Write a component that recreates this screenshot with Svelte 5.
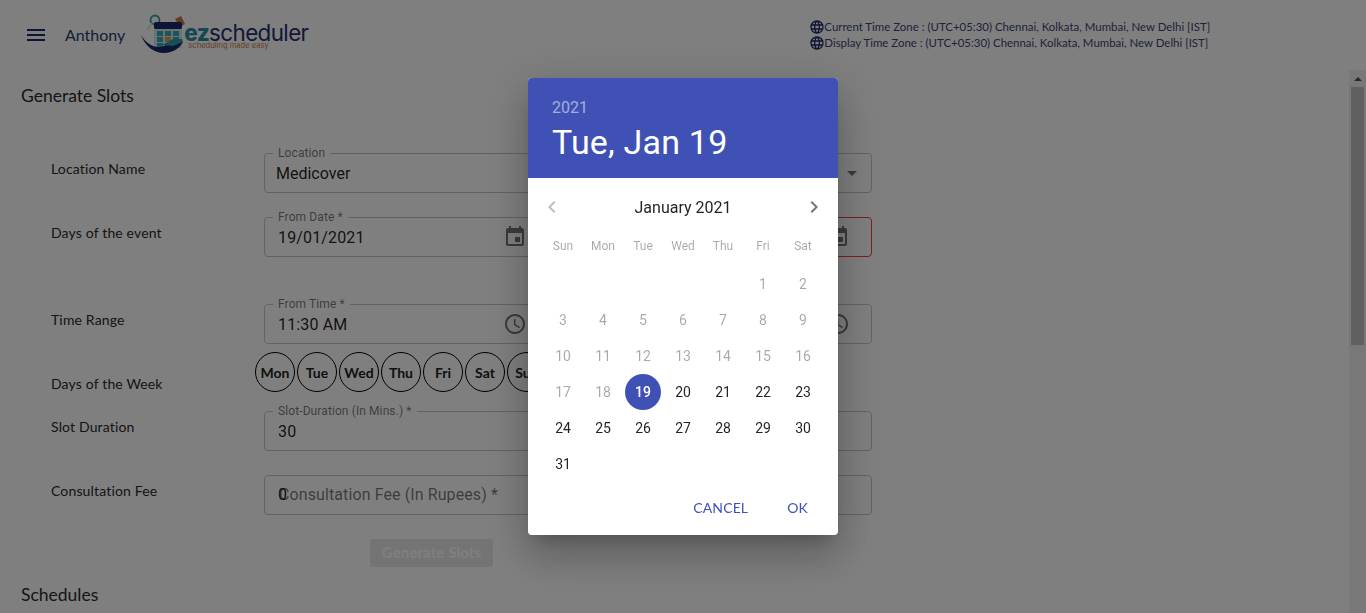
<script>
  const weekdays = ['Sun', 'Mon', 'Tue', 'Wed', 'Thu', 'Fri', 'Sat'];
  // January 2021 starts on a Friday, days before today are disabled
  const blanks = [0, 1, 2, 3, 4];
  const days = Array.from({ length: 31 }, (_, i) => i + 1);
  const today = 19;
  const weekBtns = ['Mon', 'Tue', 'Wed', 'Thu', 'Fri', 'Sat', 'Sun'];
  const zones = ['Current', 'Display'];

  const icons = {
    menu: 'M3 18h18v-2H3v2zm0-5h18v-2H3v2zm0-7v2h18V6H3z',
    globe: 'M11.99 2C6.47 2 2 6.48 2 12s4.47 10 9.99 10C17.52 22 22 17.52 22 12S17.52 2 11.99 2zm6.93 6h-2.95c-.32-1.25-.78-2.45-1.38-3.56 1.84.63 3.37 1.91 4.33 3.56zM12 4.04c.83 1.2 1.48 2.53 1.91 3.96h-3.82c.43-1.43 1.08-2.76 1.91-3.96zM4.26 14C4.1 13.36 4 12.69 4 12s.1-1.36.26-2h3.38c-.08.66-.14 1.32-.14 2 0 .68.06 1.34.14 2H4.26zm.82 2h2.95c.32 1.25.78 2.45 1.38 3.56-1.84-.63-3.37-1.9-4.33-3.56zm2.95-8H5.08c.96-1.66 2.49-2.93 4.33-3.56C8.81 5.55 8.35 6.75 8.03 8zM12 19.96c-.83-1.2-1.48-2.53-1.91-3.96h3.82c-.43 1.43-1.08 2.76-1.91 3.96zM14.34 14H9.66c-.09-.66-.16-1.32-.16-2 0-.68.07-1.35.16-2h4.68c.09.65.16 1.32.16 2 0 .68-.07 1.34-.16 2zm.25 5.56c.6-1.11 1.06-2.31 1.38-3.56h2.95c-.96 1.65-2.49 2.93-4.33 3.56zM16.36 14c.08-.66.14-1.32.14-2 0-.68-.06-1.34-.14-2h3.38c.16.64.26 1.31.26 2s-.1 1.36-.26 2h-3.38z',
    event: 'M17 12h-5v5h5v-5zM16 1v2H8V1H6v2H5c-1.11 0-1.99.9-1.99 2L3 19c0 1.1.89 2 2 2h14c1.1 0 2-.9 2-2V5c0-1.1-.9-2-2-2h-1V1h-2zm3 18H5V8h14v11z',
    clock: 'M11.99 2C6.47 2 2 6.48 2 12s4.47 10 9.99 10C17.52 22 22 17.52 22 12S17.52 2 11.99 2zM12 20c-4.42 0-8-3.58-8-8s3.58-8 8-8 8 3.58 8 8-3.58 8-8 8zm.5-13H11v6l5.25 3.15.75-1.23-4.5-2.67z',
    caret: 'M7 10l5 5 5-5z',
    left: 'M15.41 16.59L10.83 12l4.58-4.59L14 6l-6 6 6 6 1.41-1.41z',
    right: 'M8.59 16.59L13.17 12 8.59 7.41 10 6l6 6-6 6-1.41-1.41z'
  };
  const cellX = [20, 28, 36];
  const cellY = [19, 25, 31];
</script>

{#snippet icon(name, size, cls)}
  <svg class={cls} width={size} height={size} viewBox="0 0 24 24"><path d={icons[name]} /></svg>
{/snippet}

<div class="page">
  <header class="topbar">
    <button class="menu-btn">{@render icon('menu', 24, 'navy')}</button>
    <span class="username">Anthony</span>
    <div class="logo">
      <svg class="logo-mark" width="62" height="44" viewBox="0 0 62 44">
        <circle cx="18" cy="8" r="4.5" fill="none" stroke="#2f9db0" stroke-width="1.8" />
        <path d="M15 11.5 L10 18" stroke="#e6e6e6" stroke-width="2.2" />
        <path d="M38 7 L44 4 L48 12 L43 15 Z" fill="#c9784a" />
        <rect x="17" y="17" width="28" height="19" fill="#cfe6ea" />
        <rect x="17" y="10" width="28" height="7" rx="1.5" fill="#1d2a68" />
        {#each cellY as y}
          {#each cellX as x, i}
            <rect {x} {y} width="6" height="5" fill={i === 1 && y === 25 ? '#d9a441' : '#3aa6b8'} />
          {/each}
        {/each}
        <path d="M4 23 C10 33 19 37 27 34 L38 29 L46 30 C42 37 35 41 27 41 C17 41 8 34 4 23 Z" fill="#1d2a68" />
        <path d="M25 33 L36 27 L45 27 L46 30 L36 34 Z" fill="#2f9db0" />
      </svg>
      <div class="logo-text">
        <div class="logo-name"><b>ez</b>scheduler</div>
        <div class="logo-tag">scheduling made easy</div>
      </div>
    </div>
    <div class="zones">
      {#each zones as z}
        <div class="zone">
          {@render icon('globe', 16, 'navy')}
          <span>{z} Time Zone : (UTC+05:30) Chennai, Kolkata, Mumbai, New Delhi [IST]</span>
        </div>
      {/each}
    </div>
  </header>

  <div class="body">
    <main class="content">
      <h2 class="title">Generate Slots</h2>

      <div class="row r-location">
        <div class="row-label">Location Name</div>
        <div class="fields">
          <div class="field select">
            <span class="float">Location</span>
            <span class="value">Medicover</span>
          </div>
          <div class="field">
            {@render icon('caret', 24, 'adorn')}
          </div>
        </div>
      </div>

      <div class="row r-dates">
        <div class="row-label">Days of the event</div>
        <div class="fields">
          <div class="field picker">
            <span class="float">From Date *</span>
            <span class="value">19/01/2021</span>
            {@render icon('event', 24, 'adorn')}
          </div>
          <div class="field picker error">
            <span class="float">To Date *</span>
            {@render icon('event', 24, 'adorn')}
          </div>
        </div>
      </div>

      <div class="row r-times">
        <div class="row-label">Time Range</div>
        <div class="fields">
          <div class="field picker">
            <span class="float">From Time *</span>
            <span class="value">11:30 AM</span>
            {@render icon('clock', 24, 'adorn')}
          </div>
          <div class="field picker">
            <span class="float">To Time *</span>
            {@render icon('clock', 24, 'adorn')}
          </div>
        </div>
      </div>

      <div class="row r-week">
        <div class="row-label">Days of the Week</div>
        <div class="week-btns">
          {#each weekBtns as d}
            <div class="week-btn">{d}</div>
          {/each}
        </div>
      </div>

      <div class="row r-slot">
        <div class="row-label">Slot Duration</div>
        <div class="fields">
          <div class="field">
            <span class="float">Slot-Duration (In Mins.) *</span>
            <span class="value">30</span>
          </div>
        </div>
      </div>

      <div class="row r-fee">
        <div class="row-label">Consultation Fee</div>
        <div class="fields">
          <div class="field">
            <span class="placeholder">Consultation Fee (In Rupees) *</span>
            <span class="value fee-value">0</span>
          </div>
        </div>
      </div>

      <div class="actions">
        <button class="generate">Generate Slots</button>
      </div>

      <h2 class="title schedules">Schedules</h2>
    </main>

    <div class="scrollbar">
      <div class="arrow"></div>
      <div class="thumb"></div>
    </div>
  </div>
</div>

<div class="overlay">
  <div class="dialog">
    <div class="dlg-head">
      <div class="dlg-year">2021</div>
      <div class="dlg-date">Tue, Jan 19</div>
    </div>
    <div class="dlg-body">
      <div class="month-bar">
        <button class="nav">{@render icon('left', 24, 'nav-off')}</button>
        <span class="month">January 2021</span>
        <button class="nav">{@render icon('right', 24, 'nav-on')}</button>
      </div>
      <div class="grid wk">
        {#each weekdays as w}
          <span>{w}</span>
        {/each}
      </div>
      <div class="grid cal">
        {#each blanks as b}
          <span></span>
        {/each}
        {#each days as d}
          <span class="day" class:off={d < today} class:sel={d === today}>{d}</span>
        {/each}
      </div>
    </div>
    <div class="dlg-actions">
      <button class="txt-btn">CANCEL</button>
      <button class="txt-btn">OK</button>
    </div>
  </div>
</div>

<style>
  :global(body) {
    background: #fff;
  }
  button {
    border: none;
    background: none;
    padding: 0;
    font: inherit;
  }
  .page {
    height: 613px;
    overflow: hidden;
    display: flex;
    flex-direction: column;
    font-family: Lato, "Noto Sans", sans-serif;
    color: #2b2b2b;
  }

  /* top bar */
  .topbar {
    height: 70px;
    flex: none;
    display: flex;
    align-items: center;
    padding-left: 24px;
    box-sizing: border-box;
  }
  .menu-btn {
    width: 24px;
    height: 24px;
  }
  .navy {
    fill: #1d2a68;
    display: block;
  }
  .username {
    margin-left: 17px;
    margin-top: -2px;
    font-size: 16px;
    color: #2d3a6e;
  }
  .logo {
    margin-left: 12px;
    display: flex;
    margin-top: -2px;
    width: 170px;
    height: 44px;
  }
  .logo-mark {
    flex: none;
  }
  .logo-text {
    margin-left: -15px;
    margin-top: 8px;
  }
  .logo-name {
    font-family: Inter, sans-serif;
    font-size: 22.4px;
    line-height: 26px;
    letter-spacing: -0.6px;
    white-space: nowrap;
    color: #24306e;
  }
  .logo-name b {
    font-weight: 800;
    color: #2a8ea8;
  }
  .logo-tag {
    font-family: Inter, sans-serif;
    font-size: 7.6px;
    line-height: 9px;
    margin-top: -5px;
    margin-left: 4px;
    white-space: nowrap;
    color: #c9803f;
  }
  .zones {
    margin-left: 502px;
    font-family: Lato, sans-serif;
    font-size: 11.45px;
    line-height: 16px;
    color: #3c4672;
    margin-top: -1px;
  }
  .zone {
    display: flex;
    align-items: center;
    white-space: nowrap;
  }
  .zone span {
    margin-left: -1px;
  }

  /* form */
  .body {
    flex: 1;
    display: flex;
    min-height: 0;
  }
  .content {
    flex: 1;
    padding-left: 21px;
    min-width: 0;
  }
  .title {
    margin: 16px 0 0;
    font-weight: 400;
    font-size: 17.5px;
    line-height: 20px;
  }
  .row {
    display: flex;
    padding-left: 30px;
  }
  .row-label {
    width: 213px;
    flex: none;
    font-size: 14px;
    line-height: 18px;
    letter-spacing: 0.15px;
    padding-top: 7px;
  }
  .r-location { margin-top: 47px; }
  .r-dates { margin-top: 24px; }
  .r-times { margin-top: 47px; }
  .r-week { margin-top: 8px; }
  .r-slot { margin-top: 18px; }
  .r-fee { margin-top: 24px; }
  .r-week .row-label {
    padding-top: 23px;
  }
  .fields {
    display: flex;
    gap: 38px;
    width: 608px;
  }
  .field {
    position: relative;
    width: 285px;
    height: 40px;
    box-sizing: border-box;
    border: 1px solid #c6c6c6;
    border-radius: 4px;
    display: flex;
    align-items: center;
    justify-content: flex-end;
    padding: 0 7px;
    font-family: Roboto, sans-serif;
  }
  .field.picker {
    padding-right: 21px;
  }
  .field.error {
    border-color: #f44336;
  }
  .r-slot .field,
  .r-fee .field {
    width: 608px;
  }
  .float {
    position: absolute;
    left: 8px;
    top: -7px;
    padding: 0 5px;
    background: #fff;
    font-size: 12px;
    line-height: 13px;
    letter-spacing: 0.1px;
    color: rgba(0, 0, 0, 0.54);
    white-space: nowrap;
  }
  .value {
    position: absolute;
    left: 13px;
    top: 10px;
    font-size: 16px;
    line-height: 19px;
    letter-spacing: 0.15px;
    color: rgba(0, 0, 0, 0.87);
  }
  .select .value {
    left: 11px;
    letter-spacing: 0;
  }
  .fee-value {
    top: 9px;
  }
  .placeholder {
    position: absolute;
    left: 14px;
    top: 9px;
    font-size: 16px;
    line-height: 19px;
    letter-spacing: 0.1px;
    color: rgba(0, 0, 0, 0.54);
  }
  .field :global(.adorn) {
    fill: rgba(0, 0, 0, 0.54);
    display: block;
  }
  .week-btns {
    display: flex;
    gap: 2px;
    margin-left: -9px;
  }
  .week-btn {
    width: 40px;
    height: 40px;
    box-sizing: border-box;
    border: 1px solid #000;
    border-radius: 50%;
    display: flex;
    align-items: center;
    justify-content: center;
    font-size: 14px;
    font-weight: 700;
    color: #222;
  }
  .actions {
    margin-top: 24px;
    padding-left: 349px;
  }
  .generate {
    width: 123px;
    height: 28px;
    padding-bottom: 3px;
    border-radius: 2px;
    background: #e9e9e9;
    color: #fff;
    font-size: 15px;
    font-weight: 700;
    letter-spacing: 0.1px;
    font-family: Lato, sans-serif;
  }
  .schedules {
    margin-top: 18px;
  }

  /* scrollbar */
  .scrollbar {
    width: 17px;
    flex: none;
    background: #f1f1f1;
    display: flex;
    flex-direction: column;
    align-items: center;
  }
  .arrow {
    margin-top: 7px;
    width: 0;
    height: 0;
    border-left: 4px solid transparent;
    border-right: 4px solid transparent;
    border-bottom: 4px solid #505050;
  }
  .thumb {
    margin-top: 6px;
    width: 13px;
    height: 258px;
    background: #c1c1c1;
  }

  /* date picker */
  .overlay {
    position: fixed;
    inset: 0;
    background: rgba(0, 0, 0, 0.5);
    display: flex;
    align-items: center;
    justify-content: center;
  }
  .dialog {
    width: 310px;
    background: #fff;
    border-radius: 4px;
    overflow: hidden;
    font-family: Roboto, sans-serif;
    box-shadow: 0 11px 15px -7px rgba(0, 0, 0, 0.2), 0 24px 38px 3px rgba(0, 0, 0, 0.14), 0 9px 46px 8px rgba(0, 0, 0, 0.12);
  }
  .dlg-head {
    height: 100px;
    box-sizing: border-box;
    background: #3f51b5;
    padding: 20px 24px 0;
    color: #fff;
  }
  .dlg-year {
    font-size: 16px;
    line-height: 20px;
    color: rgba(255, 255, 255, 0.54);
  }
  .dlg-date {
    font-size: 34px;
    line-height: 40px;
    letter-spacing: 0.2px;
    margin-top: 4px;
  }
  .dlg-body {
    padding: 0 15px;
  }
  .month-bar {
    display: flex;
    align-items: center;
    justify-content: space-between;
    height: 24px;
    margin-top: 17px;
  }
  .nav {
    width: 24px;
    height: 24px;
    margin: 0 -3px;
  }
  .nav :global(svg) {
    display: block;
  }
  .nav :global(.nav-off) {
    fill: rgba(0, 0, 0, 0.26);
  }
  .nav :global(.nav-on) {
    fill: rgba(0, 0, 0, 0.54);
  }
  .month {
    font-size: 16px;
    line-height: 24px;
    margin-top: 1px;
    color: rgba(0, 0, 0, 0.87);
  }
  .grid {
    display: grid;
    grid-template-columns: repeat(7, 40px);
  }
  .wk {
    margin-top: 17px;
    height: 20px;
    font-size: 12px;
    line-height: 20px;
    text-align: center;
    color: rgba(0, 0, 0, 0.34);
  }
  .cal {
    margin-top: 10px;
    grid-auto-rows: 36px;
  }
  .day {
    width: 36px;
    height: 36px;
    margin: 0 2px;
    border-radius: 50%;
    display: flex;
    align-items: center;
    justify-content: center;
    font-size: 14px;
    color: rgba(0, 0, 0, 0.87);
  }
  .day.off {
    color: rgba(0, 0, 0, 0.34);
  }
  .day.sel {
    background: #3f51b5;
    color: #fff;
    font-weight: 500;
  }
  .dlg-actions {
    display: flex;
    justify-content: flex-end;
    gap: 39px;
    height: 53px;
    padding: 7px 30px 0 0;
    box-sizing: border-box;
  }
  .txt-btn {
    height: 36px;
    font-family: Lato, sans-serif;
    font-size: 14px;
    letter-spacing: 0.15px;
    color: #3f51b5;
  }
</style>
